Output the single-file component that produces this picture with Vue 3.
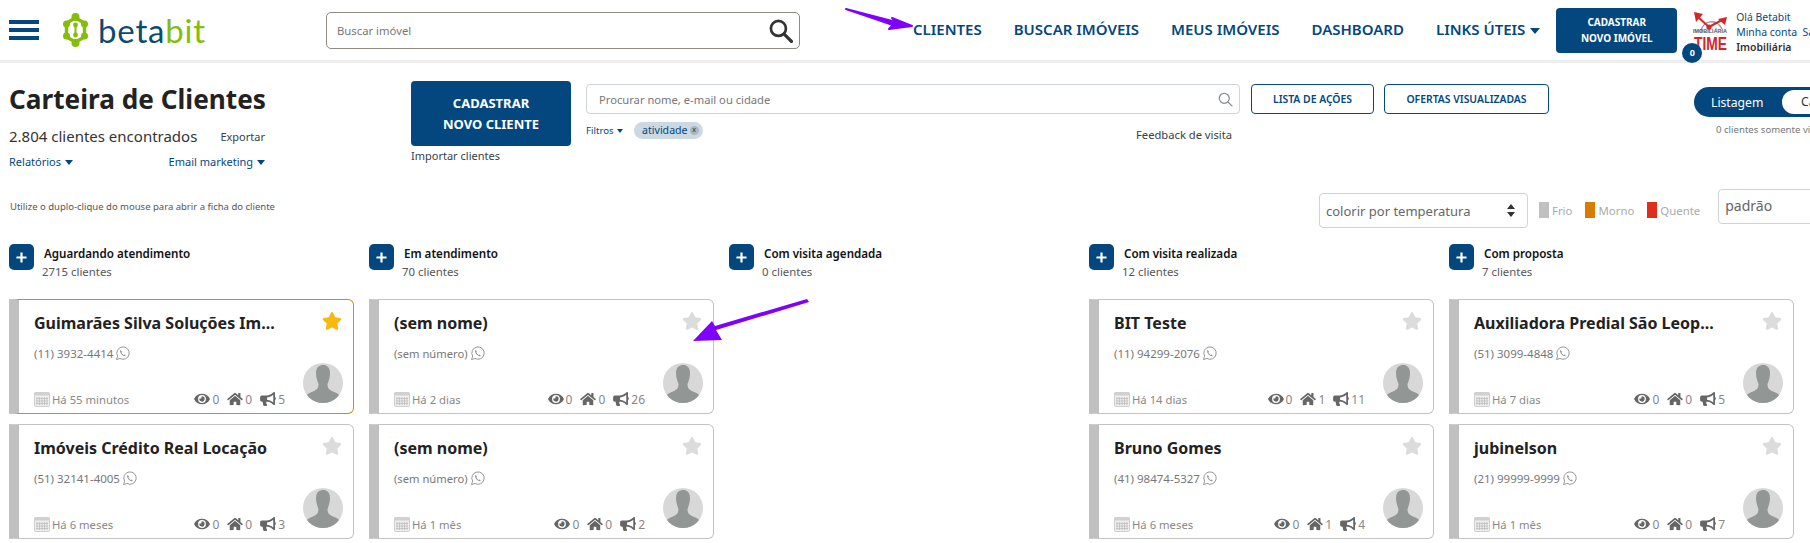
<script setup>
const icons = {
  eye: { vb: '0 0 576 512', d: 'M572.52 241.4C518.29 135.59 410.93 64 288 64S57.68 135.64 3.48 241.41a32.35 32.35 0 0 0 0 29.19C57.71 376.41 165.07 448 288 448s230.32-71.64 284.52-177.41a32.35 32.35 0 0 0 0-29.19zM288 400a144 144 0 1 1 144-144 143.93 143.93 0 0 1-144 144zm0-240a95.31 95.31 0 0 0-25.31 3.79 47.85 47.85 0 0 1-66.9 66.9A95.78 95.78 0 1 0 288 160z' },
  home: { vb: '0 0 576 512', d: 'M280.37 148.26L96 300.11V464a16 16 0 0 0 16 16l112.06-.29a16 16 0 0 0 15.92-16V368a16 16 0 0 1 16-16h64a16 16 0 0 1 16 16v95.64a16 16 0 0 0 16 16.05L464 480a16 16 0 0 0 16-16V300L295.67 148.26a12.19 12.19 0 0 0-15.3 0zM571.6 251.47L488 182.56V44.05a12 12 0 0 0-12-12h-56a12 12 0 0 0-12 12v72.61L318.47 43a48 48 0 0 0-61 0L4.34 251.47a12 12 0 0 0-1.6 16.9l25.5 31A12 12 0 0 0 45.15 301l235.22-193.74a12.19 12.19 0 0 1 15.3 0L530.9 301a12 12 0 0 0 16.9-1.6l25.5-31a12 12 0 0 0-1.7-16.93z' },
  horn: { vb: '0 0 576 512', d: 'M576 240c0-23.63-12.95-44.04-32-55.12V32.01C544 23.26 537.02 0 512 0c-7.12 0-14.19 2.38-19.98 7.02l-85.03 68.03C364.28 109.19 310.66 128 256 128H64c-35.35 0-64 28.65-64 64v96c0 35.35 28.65 64 64 64h33.7c-1.39 10.48-2.18 21.14-2.18 32 0 39.77 9.26 77.35 25.56 110.94 5.19 10.69 16.52 17.06 28.4 17.06h74.28c26.05 0 41.69-29.84 25.9-50.56-16.4-21.52-26.15-48.36-26.15-77.44 0-11.11 1.62-21.79 4.41-32H256c54.66 0 108.28 18.81 150.98 52.95l85.03 68.03a32.023 32.023 0 0 0 19.98 7.02c24.92 0 32-22.78 32-32V295.13C563.05 284.04 576 263.63 576 240zm-96 141.42l-33.05-26.44C392.95 311.78 325.12 288 256 288v-96c69.12 0 136.95-23.78 190.95-66.98L480 98.58v282.84z' },
}
const starPath = 'M259.3 17.8L194 150.2 47.9 171.5c-26.2 3.8-36.7 36.1-17.7 54.6l105.7 103-25 145.5c-4.5 26.3 23.2 46 46.4 33.7L288 439.6l130.7 68.7c23.2 12.2 50.9-7.4 46.4-33.7l-25-145.5 105.7-103c19-18.5 8.5-50.8-17.7-54.6L382 150.2 316.7 17.8c-11.7-23.6-45.6-23.9-57.4 0z'

const nav = ['CLIENTES', 'BUSCAR IMÓVEIS', 'MEUS IMÓVEIS', 'DASHBOARD']

const columns = [
  { title: 'Aguardando atendimento', count: '2715 clientes', cards: [
    { name: 'Guimarães Silva Soluções Im...', phone: '(11) 3932-4414', when: 'Há 55 minutos', stats: [0, 0, 5], fav: true },
    { name: 'Imóveis Crédito Real Locação', phone: '(51) 32141-4005', when: 'Há 6 meses', stats: [0, 0, 3] },
  ] },
  { title: 'Em atendimento', count: '70 clientes', cards: [
    { name: '(sem nome)', phone: '(sem número)', when: 'Há 2 dias', stats: [0, 0, 26], small: true },
    { name: '(sem nome)', phone: '(sem número)', when: 'Há 1 mês', stats: [0, 0, 2], small: true },
  ] },
  { title: 'Com visita agendada', count: '0 clientes', cards: [] },
  { title: 'Com visita realizada', count: '12 clientes', cards: [
    { name: 'BIT Teste', phone: '(11) 94299-2076', when: 'Há 14 dias', stats: [0, 1, 11] },
    { name: 'Bruno Gomes', phone: '(41) 98474-5327', when: 'Há 6 meses', stats: [0, 1, 4] },
  ] },
  { title: 'Com proposta', count: '7 clientes', cards: [
    { name: 'Auxiliadora Predial São Leop...', phone: '(51) 3099-4848', when: 'Há 7 dias', stats: [0, 0, 5] },
    { name: 'jubinelson', phone: '(21) 99999-9999', when: 'Há 1 mês', stats: [0, 0, 7] },
  ] },
]
const statIcons = ['eye', 'home', 'horn']
</script>

<template>
  <div class="page">
    <header class="header">
      <div class="burger"><span></span><span></span><span></span></div>
      <svg class="logo-mark" viewBox="0 0 25 34" fill="#86bc0c">
        <circle cx="12.5" cy="4" r="4" />
        <circle cx="12.5" cy="30" r="4" />
        <circle cx="3.5" cy="11" r="3.5" />
        <circle cx="21.5" cy="11" r="3.5" />
        <circle cx="3.5" cy="23" r="3.5" />
        <circle cx="21.5" cy="23" r="3.5" />
        <path d="M12.5 5 L21.5 10 V24 L12.5 29 L3.5 24 V10 Z" fill="none" stroke="#86bc0c" stroke-width="3.4" />
        <rect x="11.5" y="11" width="2" height="12" />
        <circle cx="12.500" cy="12" r="2.4" />
        <circle cx="12.500" cy="22" r="2.4" />
      </svg>
      <div class="logo-text"><span class="beta">beta</span><span class="bit">bit</span></div>
      <div class="top-search">
        <span>Buscar imóvel</span>
        <svg viewBox="0 0 24 24" width="25" height="25" fill="none" stroke="#333" stroke-width="2.6">
          <circle cx="10" cy="10" r="7.2" />
          <path d="M15.5 15.5 L22.5 22.5" stroke-linecap="round" stroke-width="3.2" />
        </svg>
      </div>
      <nav class="nav">
        <a v-for="item in nav" :key="item">{{ item }}</a>
        <a>LINKS ÚTEIS <i class="caret caret-big"></i></a>
      </nav>
      <button class="head-btn">CADASTRAR<br />NOVO IMÓVEL</button>
      <div class="brand">
        <svg viewBox="0 0 36 42" width="36" height="42" class="brand-art">
          <path d="M9 20 C10 8 25 6 30 17" fill="none" stroke="#999" stroke-width="1.4" />
          <path d="M6 5 L17 15 L30 8" fill="none" stroke="#d4262c" stroke-width="2" />
          <path d="M2 0 L11 2 L4 10 Z M35 5 L33 13 L26 7 Z" fill="#d4262c" />
          <circle cx="17" cy="15" r="2.6" fill="#d4262c" />
          <text x="1" y="20.500" font-size="4.500" font-weight="700" fill="#555" textLength="34" lengthAdjust="spacingAndGlyphs" font-family="Liberation Sans, sans-serif">IMOBILIÁRIA</text>
          <text x="2" y="38" font-size="18" font-weight="700" fill="#d4262c" textLength="33" lengthAdjust="spacingAndGlyphs" font-family="Liberation Sans, sans-serif">TIME</text>
        </svg>
        <span class="badge">0</span>
      </div>
      <div class="user">
        <div>Olá <a>Betabit</a></div>
        <div><a>Minha conta</a>&nbsp; <a>Sair</a></div>
        <div class="agency">Imobiliária</div>
      </div>
    </header>

    <section class="top">
      <div class="summary">
        <h1>Carteira de Clientes</h1>
        <div class="meta"><span class="found">2.804 clientes encontrados</span><a class="dark-link">Exportar</a></div>
        <div class="links">
          <a>Relatórios <i class="caret"></i></a>
          <a>Email marketing <i class="caret"></i></a>
        </div>
      </div>
      <div class="add">
        <button class="add-btn">CADASTRAR<br />NOVO CLIENTE</button>
        <a class="dark-link import">Importar clientes</a>
      </div>
      <div class="finder">
        <div class="finder-box">
          <span>Procurar nome, e-mail ou cidade</span>
          <svg viewBox="0 0 24 24" width="15" height="15" fill="none" stroke="#8a8f94" stroke-width="2">
            <circle cx="10" cy="10" r="8" />
            <path d="M16 16 L23 23" />
          </svg>
        </div>
        <div class="filters">
          <a class="filter-link">Filtros <i class="caret caret-small"></i></a>
          <span class="chip">atividade <b>x</b></span>
          <a class="feedback">Feedback de visita</a>
        </div>
      </div>
      <div class="actions">
        <button>LISTA DE AÇÕES</button>
        <button>OFERTAS VISUALIZADAS</button>
      </div>
      <div class="view">
        <div class="toggle"><span class="t-on">Listagem</span><span class="t-off">Carteira</span></div>
        <div class="view-note">0 clientes somente visualização</div>
      </div>
    </section>

    <section class="tools">
      <p class="hint">Utilize o duplo-clique do mouse para abrir a ficha do cliente</p>
      <div class="tool-group">
        <div class="select">
          <span>colorir por temperatura</span>
          <svg viewBox="0 0 8 13" width="8" height="13" fill="#333"><path d="M4 0 L8 5 H0 Z M4 13 L8 8 H0 Z" /></svg>
        </div>
        <div class="legend">
          <span class="swatch frio"></span><span class="l-text">Frio</span>
          <span class="swatch morno"></span><span class="l-text">Morno</span>
          <span class="swatch quente"></span><span class="l-text">Quente</span>
        </div>
        <div class="order">padrão</div>
      </div>
    </section>

    <section class="board">
      <div v-for="col in columns" :key="col.title" class="column">
        <div class="col-head">
          <button class="plus"><svg viewBox="0 0 12 12" width="11" height="11"><path d="M6 0.5 V11.5 M0.5 6 H11.5" stroke="#fff" stroke-width="2.4" /></svg></button>
          <div>
            <div class="col-title">{{ col.title }}</div>
            <div class="col-count">{{ col.count }}</div>
          </div>
        </div>
        <article v-for="(card, i) in col.cards" :key="i" class="card" :class="{ gold: card.fav }">
          <div class="card-main">
            <h3>{{ card.name }}</h3>
            <div class="phone" :class="{ small: card.small }">
              {{ card.phone }}
              <svg viewBox="0 0 16 16" width="15" height="15" fill="none" stroke="#8f8f8f">
                <path d="M1.6 14.500 L2.800 10.800 A6.600 6.600 0 1 1 5.300 13.300 Z" stroke-width="1" />
                <path d="M5.600 4.600 C5 6 6 8 7.400 9.400 C8.800 10.800 10.600 11.400 11.600 10.600 L10.200 9 L9 9.600 C8 9 7.200 8 6.800 7 L7.400 6 L6.400 4.400 Z" fill="#8f8f8f" stroke="none" />
              </svg>
            </div>
            <div class="card-foot">
              <svg class="cal" viewBox="0 0 16 16" width="16" height="16">
                <rect x="0.5" y="1.5" width="15" height="14" rx="1" fill="#eee" stroke="#d0d0d0" />
                <rect x="0.5" y="1.5" width="15" height="3" fill="#d0d0d0" />
                <path d="M3 6 V14 M5.500 6 V14 M8 6 V14 M10.500 6 V14 M13 6 V14 M2 7.500 H14 M2 10 H14 M2 12.500 H14" stroke="#c2c2c2" stroke-width="0.9" />
              </svg>
              <span class="when">{{ card.when }}</span>
              <div class="stats">
                <span v-for="(n, k) in card.stats" :key="k" class="stat">
                  <svg :viewBox="icons[statIcons[k]].vb" width="16" height="14" fill="#666"><path :d="icons[statIcons[k]].d" /></svg>
                  {{ n }}
                </span>
              </div>
            </div>
          </div>
          <div class="card-side">
            <svg class="star" :class="{ on: card.fav }" viewBox="0 0 576 512" width="20" height="18"><path :d="starPath" /></svg>
            <svg class="avatar" viewBox="0 0 40 40" width="40" height="40">
              <defs><clipPath id="av"><circle cx="20" cy="20" r="20" /></clipPath></defs>
              <circle cx="20" cy="20" r="20" fill="#d8d8d8" />
              <path clip-path="url(#av)" d="M13 10 C13 4 16.5 2 20 2 C24 2 27 4.500 27 10 C27 15 25.500 18 24.500 21 C24.500 25 26 26.500 29 28 C33 29.500 36 31 38 34 L38 42 H2 L2 34 C4 31 7 29.500 11 28 C14 26.500 15.500 25 15.500 21 C14.500 18 13 15 13 10 Z" fill="#929695" />
            </svg>
          </div>
        </article>
      </div>
    </section>

    <svg class="marks" width="1810" height="543" viewBox="0 0 1810 543">
      <path d="M846 9 L896 22 L892 18 L912 26 L889 29 L893 25 Z" fill="#7f00ff" stroke="#7f00ff" stroke-width="2" stroke-linejoin="round" />
      <path d="M809 302 L716 330 L722 340 L693 341 L712 321 L715 326 L807 299 Z" fill="#7f00ff" />
    </svg>
  </div>
</template>

<style>
html, body { margin: 0; padding: 0; background: #fff; overflow: hidden; }
</style>

<style scoped>
.page {
  position: relative;
  width: 1810px;
  height: 543px;
  overflow: hidden;
  background: #fff;
  font-family: "Noto Sans", "Open Sans", sans-serif;
  color: #222;
}
a { color: #04477e; text-decoration: none; white-space: nowrap; }
button { font-family: inherit; cursor: pointer; }
h1, h3, p { margin: 0; }

.header {
  display: flex;
  align-items: center;
  width: 1810px;
  box-sizing: content-box;
  height: 60px;
  border-bottom: 3px solid #eee;
  padding-left: 9px;
}
.burger { display: flex; flex-direction: column; gap: 3.5px; width: 30px; flex: none; }
.burger span { height: 4.5px; background: #04477e; }
.logo-mark { width: 25px; height: 34px; margin-left: 24px; flex: none; }
.logo-text {
  flex: none;
  margin-left: 10px;
  font-family: Lato, sans-serif;
  font-size: 33px;
  line-height: 40px;
  letter-spacing: 0.8px;
  width: 112px;
}
.beta { color: #0e4a70; }
.bit { color: #86bc0c; }
.top-search {
  flex: none;
  margin-left: 116px;
  width: 474px;
  height: 37px;
  box-sizing: border-box;
  border: 1px solid #8f8a85;
  border-radius: 5px;
  display: flex;
  align-items: center;
  justify-content: space-between;
  padding: 0 6px 0 10px;
  font-size: 11.3px;
  color: #777;
}
.nav {
  flex: none;
  display: flex;
  gap: 32px;
  margin-left: 113px;
  margin-bottom: 3px;
  font-size: 15px;
  font-weight: 600;
}
.caret {
  display: inline-block;
  width: 0;
  height: 0;
  border-left: 4px solid transparent;
  border-right: 4px solid transparent;
  border-top: 5px solid #04477e;
  vertical-align: 1px;
  margin-left: 1px;
}
.caret-big { border-left-width: 5px; border-right-width: 5px; border-top-width: 6px; }
.caret-small { border-left-width: 3px; border-right-width: 3px; border-top-width: 4px; }
.head-btn {
  margin-left: 16px;
  width: 121px;
  height: 45px;
  padding: 0;
  border: 0;
  border-radius: 4px;
  background: #04477e;
  color: #fff;
  font-size: 10px;
  font-weight: 700;
  line-height: 16px;
  flex: none;
}
.brand {
  position: relative;
  width: 36px;
  height: 42px;
  margin-left: 15px;
  margin-top: 6px;
  flex: none;
}
.brand-art { display: block; overflow: visible; }
.badge {
  position: absolute;
  left: -10px;
  top: 31px;
  width: 20px;
  height: 20px;
  border-radius: 50%;
  background: #04477e;
  color: #fff;
  font-size: 9px;
  font-weight: 700;
  line-height: 20px;
  text-align: center;
}
.user { flex: none; margin-left: 8px; padding-top: 5px; font-size: 10.4px; line-height: 15px; white-space: nowrap; color: #444; }
.agency { font-weight: 600; color: #333; }

.top { display: flex; align-items: flex-start; height: 126px; padding-left: 9px; }
.summary { width: 256px; padding-top: 18px; flex: none; }
h1 { font-size: 26.2px; line-height: 36px; font-weight: 700; color: #222; white-space: nowrap; }
.meta { display: flex; align-items: center; justify-content: space-between; margin-top: 8px; height: 22px; }
.found { font-size: 15px; color: #333; white-space: nowrap; }
.dark-link { color: #333f48; font-size: 11px; }
.links { display: flex; justify-content: space-between; margin-top: 6px; height: 18px; font-size: 11px; line-height: 18px; }
.add { margin-left: 146px; padding-top: 18px; width: 160px; flex: none; }
.add-btn {
  display: block;
  width: 160px;
  height: 65px;
  padding: 0;
  border: 0;
  border-radius: 4px;
  background: #04477e;
  color: #fff;
  font-size: 13px;
  font-weight: 700;
  line-height: 21px;
}
.import { display: block; margin-top: 1px; line-height: 18px; }
.finder { margin-left: 15px; width: 654px; padding-top: 21px; flex: none; }
.finder-box {
  box-sizing: border-box;
  height: 30px;
  border: 1px solid #ced4da;
  border-radius: 4px;
  display: flex;
  align-items: center;
  justify-content: space-between;
  padding: 0 6px 0 12px;
  font-size: 11.2px;
  color: #777;
}
.filters { display: flex; align-items: center; height: 18px; margin-top: 7px; padding-right: 8px; }
.filter-link { font-size: 9.6px; width: 48px; flex: none; }
.chip {
  display: inline-flex;
  align-items: center;
  gap: 2px;
  height: 17px;
  padding: 0 4px 0 8px;
  border-radius: 9px;
  background: #ccd9e3;
  color: #04477e;
  font-size: 10.6px;
}
.chip b {
  width: 9px;
  height: 9px;
  border-radius: 50%;
  background: #a9b7c2;
  font-size: 7px;
  line-height: 8px;
  font-weight: 400;
  text-align: center;
  color: #333;
}
.feedback { margin-left: auto; font-size: 11.2px; color: #333f48; padding-top: 8px; }
.actions { display: flex; gap: 10px; margin-left: 11px; padding-top: 21px; flex: none; }
.actions button {
  height: 30px;
  padding: 0;
  background: #fff;
  border: 1px solid #04477e;
  border-radius: 4px;
  color: #04477e;
  font-size: 10.4px;
  font-weight: 600;
  white-space: nowrap;
}
.actions button:first-child { width: 123px; }
.actions button:last-child { width: 165px; }
.view { margin-left: 145px; padding-top: 24px; flex: none; width: 190px; }
.toggle {
  display: flex;
  align-items: center;
  height: 30px;
  width: 190px;
  padding: 3px;
  box-sizing: border-box;
  background: #04477e;
  border-radius: 15px;
  font-size: 12.2px;
}
.t-on { color: #fff; margin-left: 14px; width: 71px; flex: none; }
.t-off { flex: none; background: #fff; border-radius: 12px; color: #333; height: 24px; line-height: 24px; padding: 0 19px; }
.view-note { font-size: 9.6px; color: #777; margin-top: 6px; margin-left: 22px; white-space: nowrap; }

.tools { display: flex; height: 39px; padding-left: 10px; }
.hint { font-size: 9.5px; line-height: 14px; color: #555; margin-top: 11px; white-space: nowrap; width: 1309px; flex: none; }
.tool-group { display: flex; align-items: flex-start; flex: none; }
.select {
  box-sizing: border-box;
  width: 209px;
  height: 35px;
  margin-top: 4px;
  border: 1px solid #ced4da;
  border-radius: 4px;
  display: flex;
  align-items: center;
  justify-content: space-between;
  padding: 0 12px 0 6px;
  font-size: 13px;
  color: #666;
}
.legend { display: flex; align-items: center; height: 16px; margin: 13px 0 0 11px; font-size: 11.4px; color: #aaa; }
.swatch { width: 10px; height: 16px; margin-right: 3px; }
.frio { background: #c0c0c0; }
.morno { background: #d97c04; margin-left: 13px; }
.quente { background: #df2f1c; margin-left: 13px; }
.order {
  box-sizing: border-box;
  width: 150px;
  height: 35px;
  margin-left: 18px;
  border: 1px solid #ced4da;
  border-radius: 4px;
  padding-left: 6px;
  font-size: 14px;
  line-height: 31px;
  color: #666;
}

.board { display: grid; grid-template-columns: repeat(5, 345px); gap: 15px; padding-left: 9px; margin-top: 16px; }
.col-head { display: flex; gap: 8px; height: 55px; }
.plus {
  width: 25px;
  height: 26px;
  padding: 0;
  border: 0;
  border-radius: 5px;
  background: #04477e;
  display: flex;
  align-items: center;
  justify-content: center;
}
.col-title { font-size: 11.6px; font-weight: 600; line-height: 20px; color: #111; padding-left: 2px; white-space: nowrap; }
.col-count { font-size: 11.4px; line-height: 16px; color: #555; }

.card {
  box-sizing: border-box;
  display: grid;
  grid-template-columns: 1fr 40px;
  gap: 18px;
  height: 115px;
  margin-bottom: 10px;
  padding-right: 10px;
  border: 1px solid #c2c2c2;
  border-left: 10px solid #c0c0c0;
  border-radius: 0 6px 6px 0;
}
.card.gold { border-color: #b59a12; border-left-color: #c0c0c0; }
.card-main { display: flex; flex-direction: column; padding: 11px 0 4px 15px; min-width: 0; }
h3 { font-size: 16px; line-height: 24px; font-weight: 700; color: #222; white-space: nowrap; }
.phone { display: flex; align-items: center; gap: 2px; margin-top: 8px; height: 20px; font-size: 11.5px; color: #777; }
.phone.small { font-size: 11.2px; }
.card-foot { display: flex; align-items: center; margin-top: auto; height: 20px; font-size: 11.3px; color: #888; }
.cal { flex: none; }
.when { margin-left: 2px; white-space: nowrap; }
.stats { display: flex; gap: 8px; margin-left: auto; font-size: 12px; }
.stat { display: inline-flex; align-items: center; gap: 2px; color: #888; }
.card-side { display: flex; flex-direction: column; align-items: flex-end; justify-content: space-between; padding: 12px 0 10px; }
.star { fill: #dcdcdc; margin-right: 1px; }
.star.on { fill: #f7b90f; }
.avatar { display: block; }

.marks { position: absolute; left: 0; top: 0; pointer-events: none; }
</style>
